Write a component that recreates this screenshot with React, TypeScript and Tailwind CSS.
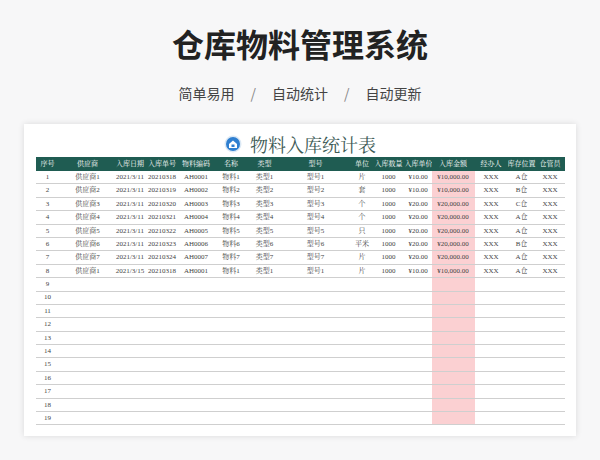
const cols = [24,56,29,35,33,37,30,72,21,32,27,43,33,28,29];
const heads = ["序号","供应商","入库日期","入库单号","物料编码","名称","类型","型号","单位","入库数量","入库单价","入库金额","经办人","库存位置","仓管员"];
const data = [
  ["供应商1","2021/3/11","20210318","AH0001","物料1","类型1","型号1","片","¥10.00","¥10,000.00","A仓"],
  ["供应商2","2021/3/11","20210319","AH0002","物料2","类型2","型号2","套","¥10.00","¥10,000.00","B仓"],
  ["供应商3","2021/3/11","20210320","AH0003","物料3","类型3","型号3","个","¥20.00","¥20,000.00","C仓"],
  ["供应商4","2021/3/11","20210321","AH0004","物料4","类型4","型号4","个","¥20.00","¥20,000.00","A仓"],
  ["供应商5","2021/3/11","20210322","AH0005","物料5","类型5","型号5","只","¥20.00","¥20,000.00","A仓"],
  ["供应商6","2021/3/11","20210323","AH0006","物料6","类型6","型号6","平米","¥20.00","¥20,000.00","B仓"],
  ["供应商7","2021/3/11","20210324","AH0007","物料7","类型7","型号7","片","¥20.00","¥20,000.00","A仓"],
  ["供应商1","2021/3/15","20210318","AH0001","物料1","类型1","型号1","片","¥10.00","¥10,000.00","A仓"],
];
export default function App() {
  const rows: string[][] = [];
  for (let i = 0; i < 19; i++) {
    const d = data[i];
    rows.push(d ? [String(i+1), d[0], d[1], d[2], d[3], d[4], d[5], d[6], d[7], "1000", d[8], d[9], "XXX", d[10], "XXX"] : [String(i+1), "", "", "", "", "", "", "", "", "", "", "", "", "", ""]);
  }
  return (
    <div className="w-[600px] h-[460px] bg-[#f7f7f8] flex flex-col items-center overflow-hidden" style={{fontFamily: '"Noto Sans CJK SC", sans-serif'}}>
      <div className="mt-[22px] text-[32px] leading-[42px] font-bold text-[#222]">仓库物料管理系统</div>
      <div className="mt-[19px] flex gap-[16px] text-[14px] leading-[20px] text-[#444]">
        <span>简单易用</span><span className="text-[#888]">/</span><span>自动统计</span><span className="text-[#888]">/</span><span>自动更新</span>
      </div>
      <div className="mt-[21px] w-[552px] h-[312px] bg-white shadow-[0_0_6px_rgba(0,0,0,0.12)] flex flex-col items-center pt-[9px]">
        <div className="flex items-center gap-[8px] h-[22px]">
          <svg width="18" height="18" viewBox="0 0 18 18">
            <circle cx="9" cy="9" r="8.5" fill="#dce9f5" />
            <circle cx="9" cy="9" r="7" fill="#2f7fd0" />
            <path d="M5 9 L9 5.5 L13 9 V13 H5 Z" fill="#fff" />
            <rect x="7.5" y="9.5" width="3" height="2.5" fill="#2f7fd0" />
          </svg>
          <span className="text-[18px] text-[#3d5a55]" style={{fontFamily: '"Noto Serif CJK SC","Liberation Serif",serif'}}>物料入库统计表</span>
        </div>
        <div className="mt-[2px] w-[529px] text-[7px] whitespace-nowrap" style={{fontFamily: '"Liberation Serif","Noto Serif CJK SC",serif'}}>
          <div className="flex h-[14px] bg-[#1f5c52] text-white items-center">
            {heads.map((h, i) => <div key={i} style={{width: cols[i]}} className="text-center shrink-0 overflow-hidden">{h}</div>)}
          </div>
          {rows.map((r, ri) => (
            <div key={ri} className="flex h-[13.4px] border-b border-[#cfcfcf] text-[#444] items-stretch">
              {r.map((c, i) => (
                <div key={i} style={{width: cols[i]}} className={`shrink-0 flex items-center justify-center ${i === 11 ? "bg-[#fbd0d2]" : ""}`}>{c}</div>
              ))}
            </div>
          ))}
        </div>
      </div>
    </div>
  );
}
